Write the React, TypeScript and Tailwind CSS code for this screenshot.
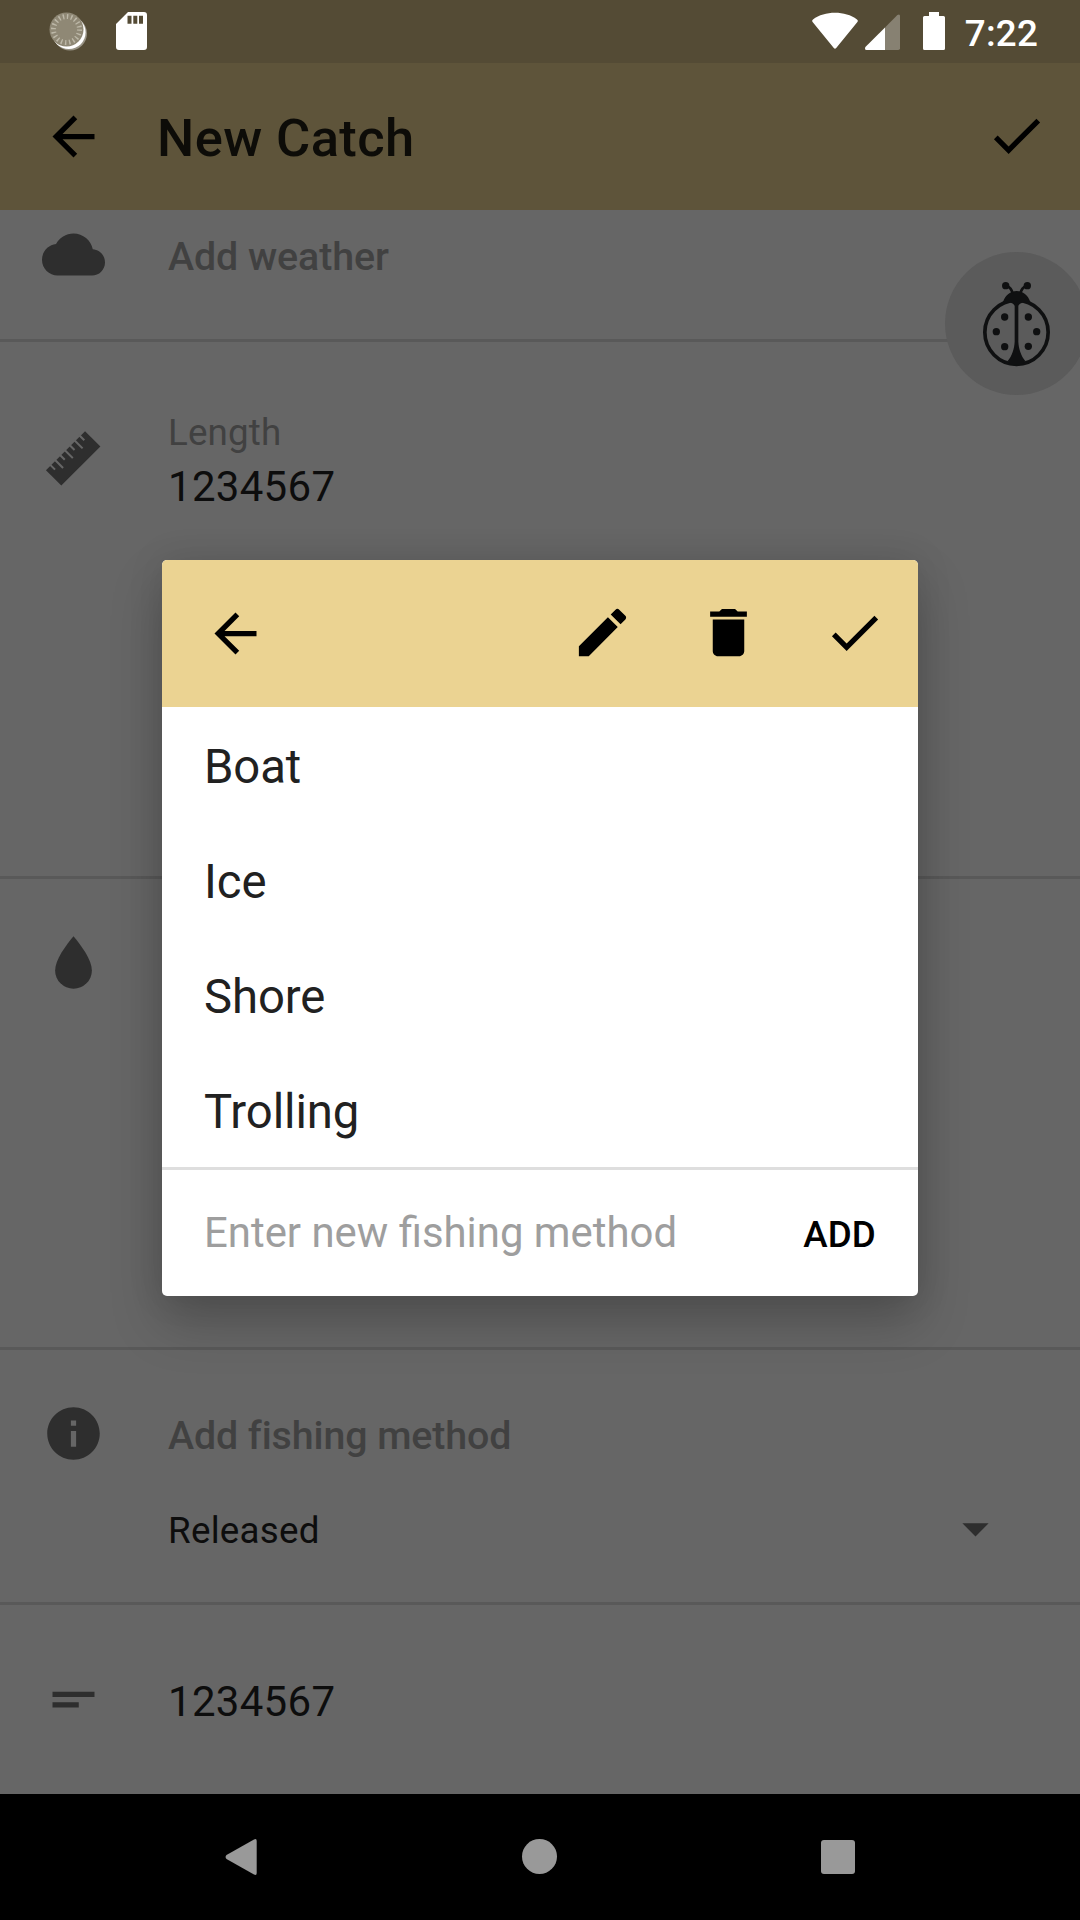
import React from "react";

type IconProps = { d: string; className?: string };

// 24-unit glyph drawn in a 63px box
function Icon({ d, className = "" }: IconProps) {
  return (
    <svg viewBox="0 0 24 24" className={`size-[63px] shrink-0 ${className}`} fill="currentColor">
      <path d={d} fillRule="evenodd" />
    </svg>
  );
}

const paths = {
  back: "M20 11H7.83l5.59-5.59L12 4l-8 8 8 8 1.41-1.41L7.83 13H20v-2z",
  check: "M9 16.17L4.83 12l-1.42 1.41L9 19 21 7l-1.41-1.41z",
  edit: "M3 17.25V21h3.75L17.81 9.94l-3.75-3.75L3 17.25zM20.71 7.04c.39-.39.39-1.02 0-1.41l-2.34-2.34c-.39-.39-1.02-.39-1.41 0l-1.83 1.83 3.75 3.75 1.83-1.83z",
  trash: "M6 19c0 1.1.9 2 2 2h8c1.1 0 2-.9 2-2V7H6v12zM19 4h-3.5l-1-1h-5l-1 1H5v2h14V4z",
  cloud:
    "M19.35 10.04C18.67 6.59 15.64 4 12 4 9.11 4 6.6 5.64 5.35 8.04 2.34 8.36 0 10.91 0 14c0 3.31 2.69 6 6 6h13c2.76 0 5-2.24 5-5 0-2.64-2.05-4.78-4.65-4.96z",
  drop: "M12 2C9.2 5.4 5 10.9 5 15a7 7 0 0 0 14 0C19 10.9 14.8 5.4 12 2z",
  info: "M12 2C6.48 2 2 6.48 2 12s4.48 10 10 10 10-4.48 10-10S17.52 2 12 2zm1 15h-2v-6h2v6zm0-8h-2V7h2v2z",
  notes: "M4 9h16v2H4zM4 13h10v2H4z",
  caret: "M7 10l5 5 5-5z",
};

function RulerIcon({ className = "" }: { className?: string }) {
  return (
    <svg viewBox="0 0 24 24" className={`size-[63px] shrink-0 ${className}`} fill="currentColor">
      <path d="M1.500 16.500L16.400 1.600L22.250 7.400L7.350 22.300z" />
      <path
        d="M2.860 14.140l2.100 2.100M4.720 12.280l3.300 3.300M6.580 10.420l2.100 2.100M8.440 8.560l3.300 3.300M10.300 6.700l2.100 2.100M12.160 4.840l3.300 3.300M14.020 2.980l2.100 2.100"
        stroke="#666666"
        strokeWidth="0.8"
      />
    </svg>
  );
}

function StatusBar() {
  return (
    <div className="flex h-[63px] items-center bg-[#544b35] pr-[42px] pl-[48px] text-white">
      <svg viewBox="0 0 42 42" className="mr-[26px] size-[42px]">
        <circle cx="22" cy="22.500" r="17" fill="#fff" opacity="0.4" />
        <circle cx="20.800" cy="21.300" r="16.800" fill="#fff" />
        <circle cx="18.500" cy="18.500" r="17" fill="#8f8875" />
        <circle cx="18.500" cy="18.500" r="13" fill="none" stroke="#bdb8a8" strokeWidth="5" strokeDasharray="1.4 2.684" />
      </svg>
      <svg viewBox="0 0 31 38" className="-mt-[1px] h-[38px] w-[31px]">
        <path
          d="M12 0h16a3 3 0 0 1 3 3v32a3 3 0 0 1-3 3H3a3 3 0 0 1-3-3V12zM11.5 3.7v8h4v-8zM17.3 3.7v8h4v-8zM23 3.7v8h4v-8z"
          fill="#fff"
          fillRule="evenodd"
        />
      </svg>
      <div className="flex-1" />
      <svg viewBox="0 0 46 38" className="-mt-[1px] mr-[7px] h-[38px] w-[46px]">
        <path d="M.8 10.2Q-.6 8.6 1 7.4C7 3 14.700.8 23 .8S39 3 45 7.4q1.600 1.200.2 2.800L24.200 36q-1.200 1.400-2.400 0z" fill="#fff" />
      </svg>
      <svg viewBox="0 0 35 38" className="-mt-[1px] mr-[23px] h-[38px] w-[35px]">
        <path d="M20 15.500L32.400 3Q35 1.600 35 4v32.200q0 1.800-1.800 1.800H20z" fill="#fff" opacity="0.3" />
        <path d="M20 15.500V38H1.600Q-.8 38 .4 35z" fill="#fff" />
      </svg>
      <svg viewBox="0 0 22 38" className="-mt-[1px] mr-[20px] h-[38px] w-[22px]">
        <path d="M6 0h10v4h4.500q1.500 0 1.500 1.500v31q0 1.500-1.500 1.500h-19Q0 38 0 36.500v-31Q0 4 1.500 4H6z" fill="#fff" />
      </svg>
      <span className="pt-[4px] text-[36.75px] leading-[44px] font-medium tracking-[0.2px]">7:22</span>
    </div>
  );
}

function Ladybug() {
  return (
    <svg viewBox="180 150 222 264" className="h-[88px] w-[74px]" fill="#0f1011">
      <ellipse cx="289.500" cy="307" rx="95" ry="96" fill="none" stroke="#0f1011" strokeWidth="11" />
      <path d="M249 216C256 195 271 183 290 183S324 195 331 216C312 215 298 219 295 228V335C296 355 303 378 316 393L304 404H275L263 393C276 378 283 355 284 335V228C281 219 268 215 249 216z" />
      <path d="M278 190q-4-17-18-23M301 190q4-17 18-23" fill="none" stroke="#0f1011" strokeWidth="8" />
      <circle cx="257" cy="167" r="11" />
      <circle cx="322" cy="167" r="11" />
      <circle cx="254" cy="261" r="11" />
      <circle cx="325" cy="261" r="11" />
      <circle cx="229" cy="305" r="11" />
      <circle cx="350" cy="305" r="11" />
      <circle cx="254" cy="350" r="11" />
      <circle cx="325" cy="349" r="11" />
    </svg>
  );
}

function Form() {
  return (
    <div className="flex flex-1 flex-col text-[#2e2e2e]">
      <section className="flex h-[132px] gap-[63px] border-b-3 border-[#595959] pl-[42px]">
        <Icon d={paths.cloud} className="mt-[12.5px]" />
        <span className="mt-[23px] text-[39.375px] leading-[48px] font-medium tracking-[-0.08px] text-[#414141]">Add weather</span>
      </section>
      <section className="flex h-[537px] gap-[63px] border-b-3 border-[#595959] pl-[42px]">
        <RulerIcon className="mt-[84.5px]" />
        <div className="mt-[69px] flex flex-col gap-[7px]">
          <span className="text-[36.75px] leading-[44px] tracking-[0.15px] text-[#414141]">Length</span>
          <span className="text-[42px] leading-[50px] tracking-[0.3px] text-[#0d0d0d]">1234567</span>
        </div>
      </section>
      <section className="flex h-[471px] border-b-3 border-[#595959] pl-[42px]">
        <Icon d={paths.drop} className="mt-[52.4px]" />
      </section>
      <section className="flex h-[255px] gap-[63px] border-b-3 border-[#595959] pl-[42px]">
        <Icon d={paths.info} className="mt-[52px]" />
        <div className="mt-[62px] flex flex-1 flex-col gap-[49px]">
          <span className="text-[39.375px] leading-[48px] font-medium tracking-[-0.1px] text-[#414141]">Add fishing method</span>
          <div className="flex h-[44px] items-center justify-between pr-[73px]">
            <span className="text-[36.75px] leading-[44px] tracking-[0.25px] text-[#0d0d0d]">Released</span>
            <Icon d={paths.caret} className="-mt-[6px]" />
          </div>
        </div>
      </section>
      <section className="flex flex-1 gap-[63px] pl-[42px]">
        <Icon d={paths.notes} className="mt-[62.5px]" />
        <span className="mt-[72px] text-[42px] leading-[50px] tracking-[0.3px] text-[#0d0d0d]">1234567</span>
      </section>
    </div>
  );
}

function MethodDialog() {
  const methods = ["Boat", "Ice", "Shore", "Trolling"];
  return (
    <div className="absolute top-[560px] left-[162px] flex h-[736px] w-[756px] flex-col overflow-hidden rounded-[5px] bg-white shadow-[0_26px_52px_rgba(0,0,0,0.22),0_0_36px_rgba(0,0,0,0.1)]">
      <div className="flex h-[147px] items-center gap-[63px] bg-[#ebd392] pr-[32px] pl-[42px] text-black">
        <Icon d={paths.back} className="mr-auto" />
        <Icon d={paths.edit} className="-mt-[2px]" />
        <Icon d={paths.trash} className="-mt-[2px]" />
        <Icon d={paths.check} className="-mt-[2px]" />
      </div>
      {methods.map((m) => (
        <div key={m} className="flex h-[115px] items-center pt-[6px] pl-[42px] text-[47.25px] tracking-[-0.1px] text-[#212121]">
          {m}
        </div>
      ))}
      <div className="flex flex-1 items-center justify-between border-t-3 border-[#dedede] pr-[42px] pl-[42px]">
        <span className="text-[41.9px] leading-[50px] text-[#9e9e9e]">Enter new fishing method</span>
        <span className="pt-[3px] text-[36.75px] leading-[44px] font-medium tracking-[0.15px] text-black">ADD</span>
      </div>
    </div>
  );
}

function NavBar() {
  return (
    <div className="flex h-[126px] items-center bg-black pb-[1px] pl-[224px] text-[#999999]">
      <svg viewBox="0 0 34 36" className="mr-[264px] h-[36px] w-[34px]" fill="currentColor">
        <path d="M30 .5Q32.700-.8 32.700 2v32q0 2.800-2.700 1.500L2.500 20Q.6 18 2.500 16z" />
      </svg>
      <div className="mr-[264px] size-[35px] rounded-full bg-[#999999]" />
      <div className="size-[34px] rounded-[3px] bg-[#999999]" />
    </div>
  );
}

export default function App() {
  return (
    <div className="relative flex h-[1920px] w-[1080px] flex-col overflow-hidden bg-[#666666] font-['Roboto',sans-serif]">
      <StatusBar />
      <header className="flex h-[147px] items-center bg-[#5e543a] pr-[32px] pl-[42px] text-black">
        <Icon d={paths.back} />
        <h1 className="ml-[52px] flex-1 pt-[3px] text-[52.5px] leading-[60px] font-medium tracking-[0.4px] text-[#0d0c08]">New Catch</h1>
        <Icon d={paths.check} className="-mt-[2px]" />
      </header>
      <Form />
      <NavBar />
      <div className="absolute top-[252px] left-[945px] flex size-[143px] justify-center rounded-full bg-[#5b5b5b] pt-[28px]">
        <Ladybug />
      </div>
      <MethodDialog />
    </div>
  );
}
